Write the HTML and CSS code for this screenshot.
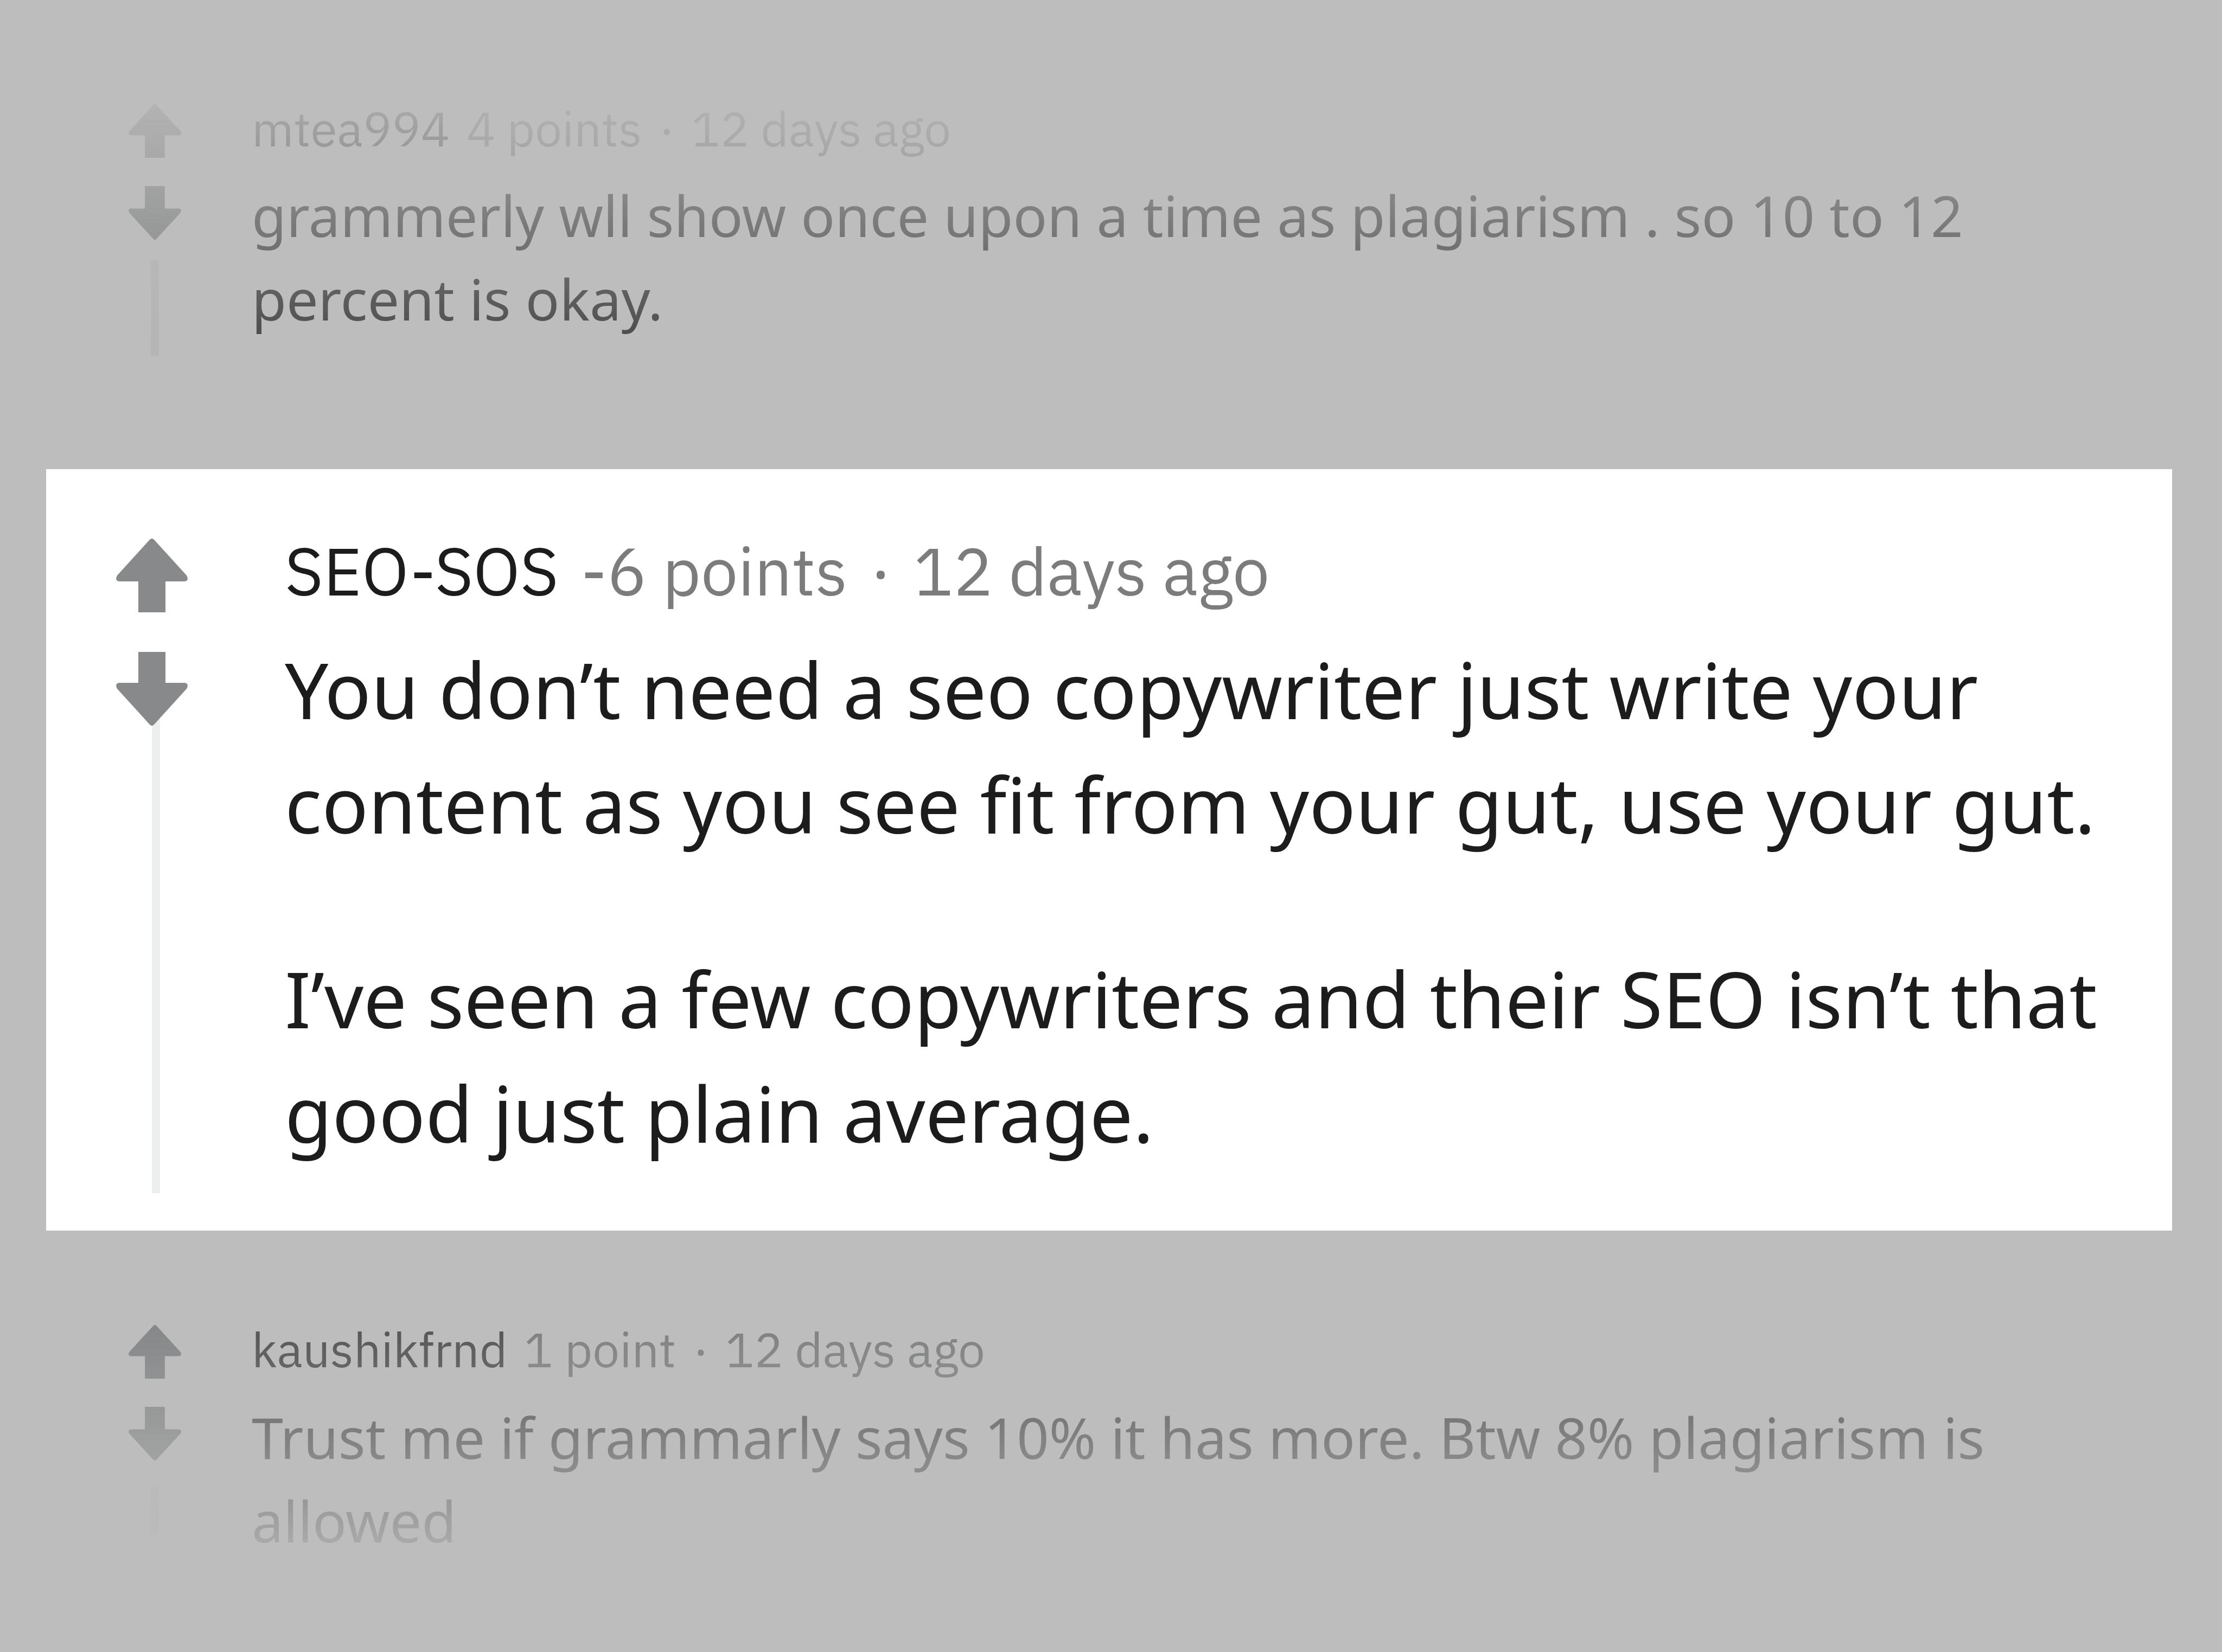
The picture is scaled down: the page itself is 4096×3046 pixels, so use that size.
FILE: index.html
```html
<!DOCTYPE html>
<html lang="en">
<head>
<meta charset="utf-8">
<meta name="viewport" content="width=device-width, initial-scale=1">
<title>Comments</title>
<link rel="stylesheet" href="styles.css">
</head>
<body>
<svg class="defs" aria-hidden="true">
  <symbol id="arrow" viewBox="0 0 132 136" preserveAspectRatio="none">
    <path d="M62 2Q66 -2 70 2L130 68Q135 77 127 79H91V136H41V79H5Q-3 77 2 68Z"/>
  </symbol>
</svg>
<main class="thread">
  <article class="comment comment-before">
    <div class="votes">
      <button class="vote" type="button" aria-label="Upvote"><svg class="icon"><use href="#arrow"/></svg></button>
      <button class="vote vote-down" type="button" aria-label="Downvote"><svg class="icon"><use href="#arrow"/></svg></button>
      <div class="line"></div>
    </div>
    <div class="content">
      <header class="meta">
        <a class="author" href="#mtea994">mtea994</a>
        <span class="info"><span>4 points</span><span>·</span><span>12 days ago</span></span>
      </header>
      <div class="text">
        <p>grammerly wll show once upon a time as plagiarism . so 10 to 12 percent is okay.</p>
      </div>
    </div>
  </article>

  <article class="comment comment-focus">
    <div class="votes">
      <button class="vote" type="button" aria-label="Upvote"><svg class="icon"><use href="#arrow"/></svg></button>
      <button class="vote vote-down" type="button" aria-label="Downvote"><svg class="icon"><use href="#arrow"/></svg></button>
      <div class="line"></div>
    </div>
    <div class="content">
      <header class="meta">
        <a class="author" href="#SEO-SOS">SEO-SOS</a>
        <span class="info"><span>-6 points</span><span>·</span><span>12 days ago</span></span>
      </header>
      <div class="text">
        <p>You don’t need a seo copywriter just write your content as you see fit from your gut, use your gut.</p>
        <p>I’ve seen a few copywriters and their SEO isn’t that good just plain average.</p>
      </div>
    </div>
  </article>

  <article class="comment comment-after">
    <div class="votes">
      <button class="vote" type="button" aria-label="Upvote"><svg class="icon"><use href="#arrow"/></svg></button>
      <button class="vote vote-down" type="button" aria-label="Downvote"><svg class="icon"><use href="#arrow"/></svg></button>
      <div class="line"></div>
    </div>
    <div class="content">
      <header class="meta">
        <a class="author" href="#kaushikfrnd">kaushikfrnd</a>
        <span class="info"><span>1 point</span><span>·</span><span>12 days ago</span></span>
      </header>
      <div class="text">
        <p>Trust me if grammarly says 10% it has more. Btw 8% plagiarism is allowed</p>
      </div>
    </div>
  </article>
</main>
</body>
</html>
```

FILE: styles.css
```css
* {
  box-sizing: border-box;
}

body {
  margin: 0;
  min-height: 100vh;
  background: #bdbdbd;
  font-family: "Noto Sans", sans-serif;
}

.defs {
  display: none;
}

.thread {
  padding: 192px 92px 160px 85px;
}

.comment {
  --arrow: #646667;
  --ink: #151515;
  --muted: #5b5c5c;
  --rail: #b0b1b2;
  display: grid;
  grid-template-columns: 97px 1fr;
  column-gap: 130px;
  padding-left: 152px;
  isolation: isolate;
}

.votes {
  display: flex;
  flex-direction: column;
}

.vote {
  z-index: 1;
  height: 99px;
  margin: 0;
  padding: 0;
  border: 0;
  background: none;
  color: var(--arrow);
  cursor: pointer;
}

.vote-down {
  margin-top: 52px;
  transform: scaleY(-1);
}

.icon {
  display: block;
  width: 100%;
  height: 100%;
  fill: currentColor;
}

.line {
  flex: 1;
  align-self: center;
  width: 15px;
  margin-top: 38px;
  background: var(--rail);
}

.content {
  padding-bottom: 28px;
}

.meta {
  display: flex;
  gap: 31px;
  font-family: "IBM Plex Sans", "Open Sans", sans-serif;
  font-size: 89px;
  line-height: 90px;
}

.author {
  color: var(--ink);
  text-decoration: none;
}

.info {
  display: flex;
  gap: 31px;
  color: var(--muted);
}

.text {
  margin-top: 38px;
  color: var(--ink);
  font-size: 104px;
  line-height: 154px;
}

.text p {
  margin: 0;
}

/* Neighbouring comments fade out away from the focused one */
.comment-before {
  margin-bottom: 209px;
  -webkit-mask-image: linear-gradient(to bottom, transparent -82px, #000 688px);
  mask-image: linear-gradient(to bottom, transparent -82px, #000 688px);
}

.comment-after {
  margin-top: 174px;
  -webkit-mask-image: linear-gradient(to bottom, #000 -305px, transparent 495px);
  mask-image: linear-gradient(to bottom, #000 -305px, transparent 495px);
}

.comment-after .content {
  padding-bottom: 0;
}

.comment-after .text {
  margin-top: 40px;
}

.comment-after .line {
  margin-top: 45px;
  margin-bottom: 52px;
}

.comment-focus {
  --arrow: #88898a;
  --ink: #1c1c1c;
  --muted: #7c7c7c;
  --rail: #edeeee;
  grid-template-columns: 132px 1fr;
  column-gap: 179px;
  padding: 128px 92px 69px 129px;
  background: #fff;
}

.comment-focus .vote {
  height: 136px;
}

.comment-focus .vote-down {
  margin-top: 73px;
}

.comment-focus .line {
  align-self: flex-start;
  margin-top: -12px;
  margin-left: 50%;
}

.comment-focus .content {
  padding-bottom: 42px;
}

.comment-focus .meta {
  gap: 41px;
  font-size: 122px;
  line-height: 120px;
}

.comment-focus .info {
  gap: 41px;
}

.comment-focus .text {
  margin-top: 53px;
  font-size: 142px;
  line-height: 211px;
}

.comment-focus .text p + p {
  margin-top: 148px;
}
```
